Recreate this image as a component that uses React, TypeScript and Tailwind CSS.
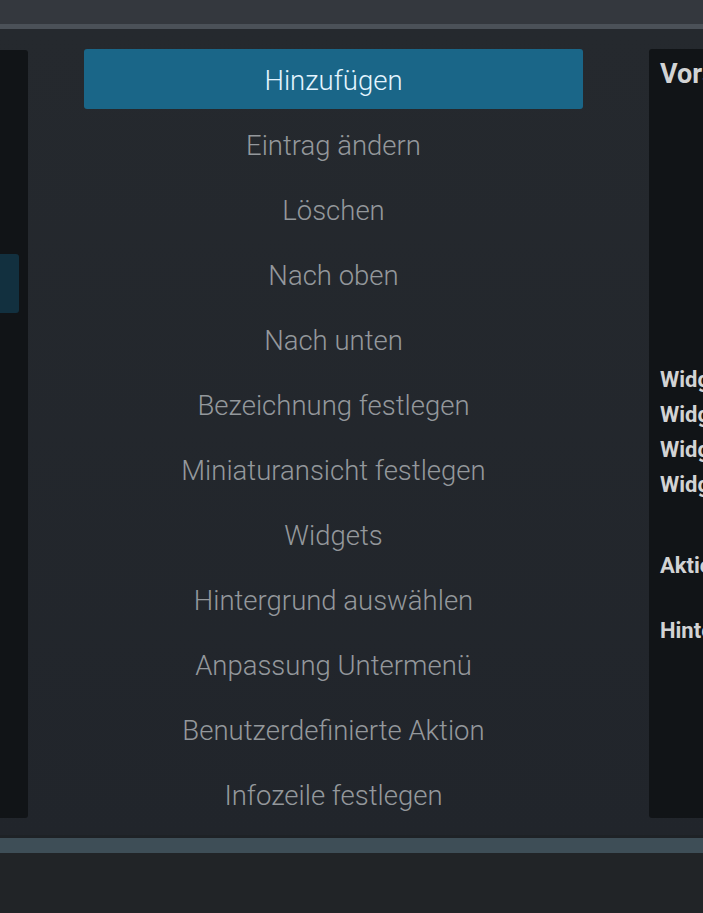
const ITEMS = [
  "Hinzufügen",
  "Eintrag ändern",
  "Löschen",
  "Nach oben",
  "Nach unten",
  "Bezeichnung festlegen",
  "Miniaturansicht festlegen",
  "Widgets",
  "Hintergrund auswählen",
  "Anpassung Untermenü",
  "Benutzerdefinierte Aktion",
  "Infozeile festlegen",
];

export default function App() {
  return (
    <div className="w-[703px] h-[913px] overflow-hidden flex flex-col bg-[#212427] font-['Roboto',sans-serif]">
      {/* top bar */}
      <div className="h-[24px] shrink-0 bg-[#34383e]" />
      <div className="h-[5px] shrink-0 bg-[#4b5158]" />

      {/* main area */}
      <div className="h-[809px] shrink-0 flex pt-[20px] pb-[17px] bg-gradient-to-b from-[#25292e] to-[#21252b] border-b-[3px] border-[#1e2226]">
        {/* left panel */}
        <div className="w-[28px] shrink-0 mt-[1px] bg-[#111417] rounded-r-[3px] pt-[204px]">
          <div className="w-[19px] h-[59px] bg-[#12303f] rounded-r-[3px]" />
        </div>

        {/* menu list */}
        <div className="w-[499px] shrink-0 ml-[56px] flex flex-col gap-[5px]">
          {ITEMS.map((label, i) => (
            <div
              key={label}
              className={`h-[60px] shrink-0 flex items-center justify-center pt-[3px] text-[27.5px] font-light rounded-[3px] ${
                i === 0 ? "bg-[#1a6688] text-[#e4f5ff]" : "text-[#94989c]"
              }`}
            >
              {label}
            </div>
          ))}
        </div>

        {/* right preview panel */}
        <div className="w-[300px] shrink-0 ml-[66px] bg-[#111417] rounded-l-[3px] pl-[11px] pt-[8px] text-[#d2d3d4] font-bold">
          <div className="text-[27px] leading-[34px]">Vorschau</div>
          <div className="mt-[271px] flex flex-col text-[22px] leading-[35px]">
            <div>Widget 1:</div>
            <div>Widget 2:</div>
            <div>Widget 3:</div>
            <div>Widget 4:</div>
          </div>
          <div className="mt-[46px] text-[22px] leading-[35px]">Aktion:</div>
          <div className="mt-[30px] text-[22px] leading-[35px]">Hintergrund:</div>
        </div>
      </div>

      {/* bottom strip */}
      <div className="h-[15px] shrink-0 bg-[#3e4e57]" />
      <div className="flex-1 bg-[#212427]" />
    </div>
  );
}
